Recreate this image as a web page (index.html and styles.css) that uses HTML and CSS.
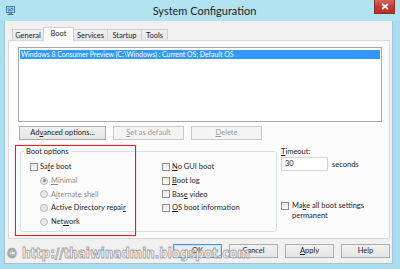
FILE: index.html
```html
<!DOCTYPE html>
<html lang="en">
<head>
  <meta charset="UTF-8">
  <title>System Configuration</title>
  <link rel="stylesheet" href="styles.css">
</head>
<body>
  <div class="window">
    <div class="titlebar">
      <svg class="app-icon" width="9" height="9" viewBox="0 0 9 9">
        <rect x="0.5" y="0.5" width="8" height="6" fill="#e8f2fb" stroke="#5a7fa8"/>
        <rect x="1.5" y="1.5" width="6" height="4" fill="#3d8fd8"/>
        <path d="M2 3.5 L4 2.5 L7 4.5" stroke="#9fd2ff" fill="none"/>
        <rect x="3" y="7" width="3" height="1" fill="#7a8896"/>
        <rect x="1.5" y="8" width="6" height="1" fill="#5d6a77"/>
      </svg>
      <div class="title">System Configuration</div>
      <div class="close">
        <svg width="8" height="7" viewBox="0 0 8 7">
          <path d="M1 1 L7 6 M7 1 L1 6" stroke="#fff" stroke-width="1.8"/>
        </svg>
      </div>
    </div>

    <div class="client">
      <div class="tabs">
        <div class="tab t-general">General</div>
        <div class="tab t-boot active">Boot</div>
        <div class="tab t-services">Services</div>
        <div class="tab t-startup">Startup</div>
        <div class="tab t-tools">Tools</div>
      </div>

      <div class="panel">
        <div class="oslist">
          <div class="os selected">Windows 8 Consumer Preview (C:\Windows) : Current OS; Default OS</div>
        </div>

        <div class="btnrow">
          <button class="btn wide">Ad<u>v</u>anced options...</button>
          <button class="btn mid" disabled><u>S</u>et as default</button>
          <button class="btn mid" disabled><u>D</u>elete</button>
        </div>

        <div class="lower">
          <fieldset class="group">
            <legend>Boot options</legend>
            <div class="cols">
              <div class="col">
                <div class="opt"><span class="check"></span><span>Sa<u>f</u>e boot</span></div>
                <div class="opt sub off"><span class="radio on"></span><span><u>M</u>inimal</span></div>
                <div class="opt sub off"><span class="radio"></span><span>A<u>l</u>ternate shell</span></div>
                <div class="opt sub"><span class="radio"></span><span>Active Directory repai<u>r</u></span></div>
                <div class="opt sub"><span class="radio"></span><span>Net<u>w</u>ork</span></div>
              </div>
              <div class="col right">
                <div class="opt"><span class="check"></span><span><u>N</u>o GUI boot</span></div>
                <div class="opt"><span class="check"></span><span><u>B</u>oot log</span></div>
                <div class="opt"><span class="check"></span><span>Bas<u>e</u> video</span></div>
                <div class="opt"><span class="check"></span><span><u>O</u>S boot information</span></div>
              </div>
            </div>
          </fieldset>

          <div class="side">
            <div class="tlabel"><u>T</u>imeout:</div>
            <div class="trow">
              <div class="tinput">30</div>
              <span>seconds</span>
            </div>
            <div class="perm">
              <span class="check"></span>
              <span>Ma<u>k</u>e all boot settings<br>permanent</span>
            </div>
          </div>
        </div>
      </div>

      <div class="footer">
        <button class="btn foot default">OK</button>
        <button class="btn foot">Cancel</button>
        <button class="btn foot"><u>A</u>pply</button>
        <button class="btn foot">Help</button>
      </div>
    </div>

    <div class="mark"></div>
    <div class="watermark">© http://thaiwinadmin.blogspot.com</div>
  </div>
</body>
</html>
```

FILE: styles.css
```css
body {
  margin: 0;
  width: 400px;
  height: 269px;
  overflow: hidden;
  background: #a9dcee;
  font-family: Lato, "Open Sans", sans-serif;
  font-size: 7.5px;
  color: #1e1e1e;
}
.window {
  position: relative;
  height: 269px;
}
.titlebar {
  height: 21px;
  display: flex;
  align-items: flex-start;
  background: #b2e3f1;
}
.app-icon {
  margin: 6px 0 0 6px;
}
.title {
  flex: 1;
  text-align: center;
  font-size: 11px;
  line-height: 22px;
  color: #222;
  padding-left: 20px;
}
.close {
  width: 21px;
  height: 14px;
  margin-right: 5px;
  background: linear-gradient(#d9655b, #c13a30 55%, #b73027);
  border: 1px solid #8d2a24;
  border-top: none;
  box-sizing: border-box;
  display: flex;
  align-items: center;
  justify-content: center;
}
.client {
  margin: 0 7px 0 4px;
  height: 243px;
  background: #f0f0f0;
  border: 1px solid #9fc4d3;
  border-top: none;
  box-sizing: border-box;
  padding: 6px 2px 0 3px;
}
.tabs {
  display: flex;
  padding-left: 4px;
  height: 13px;
  align-items: flex-end;
}
.tab {
  height: 11px;
  line-height: 11px;
  text-align: center;
  border: 1px solid #d0d0d0;
  border-bottom: none;
  margin-right: -1px;
  box-sizing: border-box;
  background: linear-gradient(#f0f0f0, #e5e5e5);
}
.t-general { width: 32px; }
.t-boot { width: 31px; }
.t-services { width: 35px; }
.t-startup { width: 35px; }
.t-tools { width: 27px; }
.tab.active {
  height: 14px;
  background: #fcfcfc;
  position: relative;
  z-index: 1;
  margin-bottom: -1px;
  line-height: 12px;
}
.panel {
  height: 199px;
  background: #fcfcfc;
  border: 1px solid #d9d9d9;
  box-sizing: border-box;
  padding: 6px 7px 0 9px;
}
.oslist {
  height: 75px;
  background: #fff;
  border: 1px solid #a8a8a8;
  box-sizing: border-box;
  padding: 2px 1px;
}
.os {
  height: 9px;
  line-height: 9px;
  padding-left: 1px;
  font-size: 6.9px;
  white-space: nowrap;
}
.os.selected {
  background: #3399ff;
  color: #fff;
}
.btnrow {
  display: flex;
  gap: 7px;
  margin: 4px 0 0 1px;
}
.btn {
  font: inherit;
  height: 14px;
  padding: 0;
  border: 1px solid #acacac;
  background: linear-gradient(#f0f0f0, #e5e5e5);
  color: #1e1e1e;
  box-sizing: border-box;
  line-height: 12px;
}
.btn:disabled {
  border-color: #c9c9c9;
  background: #f4f4f4;
  color: #9a9a9a;
}
.btn.wide { width: 87px; }
.btn.mid { width: 71px; }
.lower {
  display: flex;
  margin-top: 7px;
  margin-left: 2px;
}
.group {
  width: 257px;
  min-inline-size: 0;
  height: 85px;
  margin: 0;
  padding: 0;
  border: 1px solid #d5dfe5;
  border-radius: 3px;
  box-sizing: border-box;
  flex: none;
}
.group legend {
  padding: 0 2px;
  margin-left: 3px;
  line-height: 9px;
}
.cols {
  display: flex;
  padding: 4px 0 0 9px;
}
.col {
  width: 132px;
  flex: none;
}
.col.right {
  width: 110px;
}
.opt {
  display: flex;
  align-items: center;
  height: 13.7px;
  white-space: nowrap;
}
.opt.sub {
  padding-left: 10px;
}
.opt.off {
  color: #8d8d8d;
}
.check {
  width: 8px;
  height: 8px;
  border: 1px solid #8f8f8f;
  background: linear-gradient(#e9e9e9, #fafafa);
  box-sizing: border-box;
  margin-right: 2px;
  flex: none;
}
.radio {
  width: 8px;
  height: 8px;
  border-radius: 50%;
  border: 1px solid #b8b8b8;
  background: #e8e8e8;
  box-sizing: border-box;
  margin-right: 3px;
  flex: none;
  display: flex;
  align-items: center;
  justify-content: center;
}
.radio.on::after {
  content: "";
  width: 3px;
  height: 3px;
  border-radius: 50%;
  background: #8a8a8a;
}
.side {
  margin-left: 4px;
  flex: 1;
  white-space: nowrap;
}
.tlabel {
  line-height: 9px;
}
.trow {
  display: flex;
  align-items: center;
  margin-top: 1px;
}
.tinput {
  width: 47px;
  height: 14px;
  border: 1px solid #d4d4d4;
  background: #fff;
  box-sizing: border-box;
  padding-left: 3px;
  line-height: 12px;
  margin-right: 4px;
}
.perm {
  display: flex;
  align-items: flex-start;
  margin-top: 30px;
  line-height: 10px;
}
.perm .check {
  margin-top: 1px;
  margin-right: 3px;
}
.footer {
  display: flex;
  justify-content: flex-end;
  gap: 7px;
  padding: 5px 0 0;
}
.btn.foot {
  width: 49px;
  height: 14px;
}
.btn.default {
  border-color: #3c9be0;
  box-shadow: inset 0 0 0 1px #bfe2fb;
}
.mark {
  position: absolute;
  left: 15px;
  top: 145px;
  width: 121px;
  height: 91px;
  border: 1px solid #e42029;
  box-shadow: 0 0 1px #f07f83;
  box-sizing: border-box;
}
.watermark {
  position: absolute;
  left: 6px;
  top: 246px;
  font-family: "DejaVu Sans Condensed", "DejaVu Sans", sans-serif;
  font-weight: bold;
  font-size: 13.2px;
  color: #fafafa;
  -webkit-text-stroke: 0.8px #9a9a9a;
  white-space: nowrap;
  opacity: 0.9;
}
```
